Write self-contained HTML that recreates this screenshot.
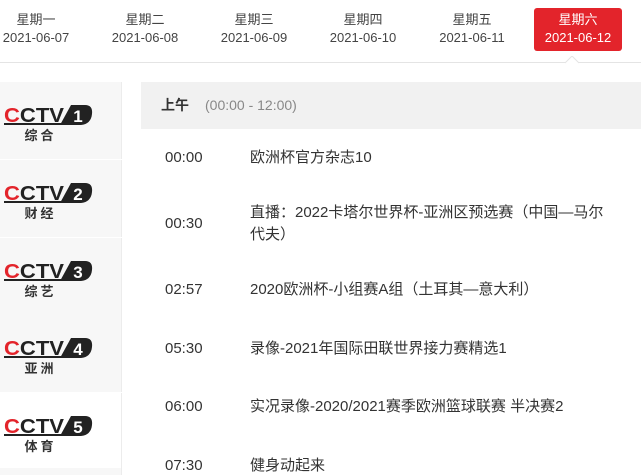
<!DOCTYPE html>
<html><head><meta charset="utf-8"><style>
*{margin:0;padding:0;box-sizing:border-box}
html,body{width:641px;height:475px;overflow:hidden}
body{background:#fff;font-family:"Liberation Sans","Noto Sans CJK SC",sans-serif;color:#333;position:relative}
.day{position:absolute;top:8px;width:88px;height:43px;text-align:center;font-size:13px;color:#444;line-height:18px;padding-top:3px}
.day.on{background:#e3242b;color:#fff;border-radius:3px}
.line{position:absolute;top:62px;left:0;width:641px;height:1px;background:#e4e4e4}
.it{position:absolute;left:0;width:122px;height:77px;background:#f7f7f7;border-right:1px solid #ececec}
.it.w{background:#fff}
.logo{position:absolute;left:2px;top:16px;width:92px;height:46px}
.hdr{position:absolute;left:141px;top:82px;width:500px;height:47px;background:#f1f1f1;font-size:14px;line-height:47px;padding-left:20px}
.hdr b{font-weight:bold;color:#333}
.hdr span{color:#888;margin-left:16px}
.r{position:absolute;font-size:15px;color:#333;line-height:22px;white-space:nowrap}
.t{left:165px}.n{left:250px}
</style></head><body>
<div class="day" style="left:-8px">星期一<br>2021-06-07</div>
<div class="day" style="left:101px">星期二<br>2021-06-08</div>
<div class="day" style="left:210px">星期三<br>2021-06-09</div>
<div class="day" style="left:319px">星期四<br>2021-06-10</div>
<div class="day" style="left:428px">星期五<br>2021-06-11</div>
<div class="day on" style="left:534px">星期六<br>2021-06-12</div>
<div class="line"></div>
<svg style="position:absolute;left:565px;top:56px" width="14" height="8"><path d="M0 7 L7 0 L14 7" fill="#fff" stroke="#e4e4e4"/></svg>
<div class="hdr"><b>上午</b><span>(00:00 - 12:00)</span></div>
<div class="r t" style="top:147px">00:00</div><div class="r n" style="top:147px">欧洲杯官方杂志10</div>
<div class="r t" style="top:213px">00:30</div><div class="r n" style="top:202px">直播：2022卡塔尔世界杯-亚洲区预选赛（中国—马尔<br>代夫）</div>
<div class="r t" style="top:279px">02:57</div><div class="r n" style="top:279px">2020欧洲杯-小组赛A组（土耳其—意大利）</div>
<div class="r t" style="top:338px">05:30</div><div class="r n" style="top:338px">录像-2021年国际田联世界接力赛精选1</div>
<div class="r t" style="top:396px">06:00</div><div class="r n" style="top:396px">实况录像-2020/2021赛季欧洲篮球联赛 半决赛2</div>
<div class="r t" style="top:455px">07:30</div><div class="r n" style="top:455px">健身动起来</div>
<div class="it" style="top:82px"><svg class="logo" viewBox="0 0 92 46"><text x="2" y="24" font-size="20" font-weight="bold" fill="#222" textLength="60" lengthAdjust="spacingAndGlyphs"><tspan fill="#e3242b">C</tspan>CTV</text><rect x="2" y="25" width="62" height="2" fill="#222"/><path d="M58 27 L69 7 L83 7 Q91 7 90 16 Q89 26 79 27Z" fill="#222"/><text x="76" y="24" font-size="17" font-weight="bold" fill="#fff" text-anchor="middle">1</text><text x="37" y="42" font-size="13" font-weight="bold" fill="#333" text-anchor="middle" font-family="Noto Sans CJK SC">综 合</text></svg></div>
<div class="it" style="top:160px"><svg class="logo" viewBox="0 0 92 46"><text x="2" y="24" font-size="20" font-weight="bold" fill="#222" textLength="60" lengthAdjust="spacingAndGlyphs"><tspan fill="#e3242b">C</tspan>CTV</text><rect x="2" y="25" width="62" height="2" fill="#222"/><path d="M58 27 L69 7 L83 7 Q91 7 90 16 Q89 26 79 27Z" fill="#222"/><text x="76" y="24" font-size="17" font-weight="bold" fill="#fff" text-anchor="middle">2</text><text x="37" y="42" font-size="13" font-weight="bold" fill="#333" text-anchor="middle" font-family="Noto Sans CJK SC">财 经</text></svg></div>
<div class="it" style="top:238px"><svg class="logo" viewBox="0 0 92 46"><text x="2" y="24" font-size="20" font-weight="bold" fill="#222" textLength="60" lengthAdjust="spacingAndGlyphs"><tspan fill="#e3242b">C</tspan>CTV</text><rect x="2" y="25" width="62" height="2" fill="#222"/><path d="M58 27 L69 7 L83 7 Q91 7 90 16 Q89 26 79 27Z" fill="#222"/><text x="76" y="24" font-size="17" font-weight="bold" fill="#fff" text-anchor="middle">3</text><text x="37" y="42" font-size="13" font-weight="bold" fill="#333" text-anchor="middle" font-family="Noto Sans CJK SC">综 艺</text></svg></div>
<div class="it" style="top:315px"><svg class="logo" viewBox="0 0 92 46"><text x="2" y="24" font-size="20" font-weight="bold" fill="#222" textLength="60" lengthAdjust="spacingAndGlyphs"><tspan fill="#e3242b">C</tspan>CTV</text><rect x="2" y="25" width="62" height="2" fill="#222"/><path d="M58 27 L69 7 L83 7 Q91 7 90 16 Q89 26 79 27Z" fill="#222"/><text x="76" y="24" font-size="17" font-weight="bold" fill="#fff" text-anchor="middle">4</text><text x="37" y="42" font-size="13" font-weight="bold" fill="#333" text-anchor="middle" font-family="Noto Sans CJK SC">亚 洲</text></svg></div>
<div class="it w" style="top:393px"><svg class="logo" viewBox="0 0 92 46"><text x="2" y="24" font-size="20" font-weight="bold" fill="#222" textLength="60" lengthAdjust="spacingAndGlyphs"><tspan fill="#e3242b">C</tspan>CTV</text><rect x="2" y="25" width="62" height="2" fill="#222"/><path d="M58 27 L69 7 L83 7 Q91 7 90 16 Q89 26 79 27Z" fill="#222"/><text x="76" y="24" font-size="17" font-weight="bold" fill="#fff" text-anchor="middle">5</text><text x="37" y="42" font-size="13" font-weight="bold" fill="#333" text-anchor="middle" font-family="Noto Sans CJK SC">体 育</text></svg></div>
<div class="it" style="top:468px;height:7px"></div>
</body></html>
